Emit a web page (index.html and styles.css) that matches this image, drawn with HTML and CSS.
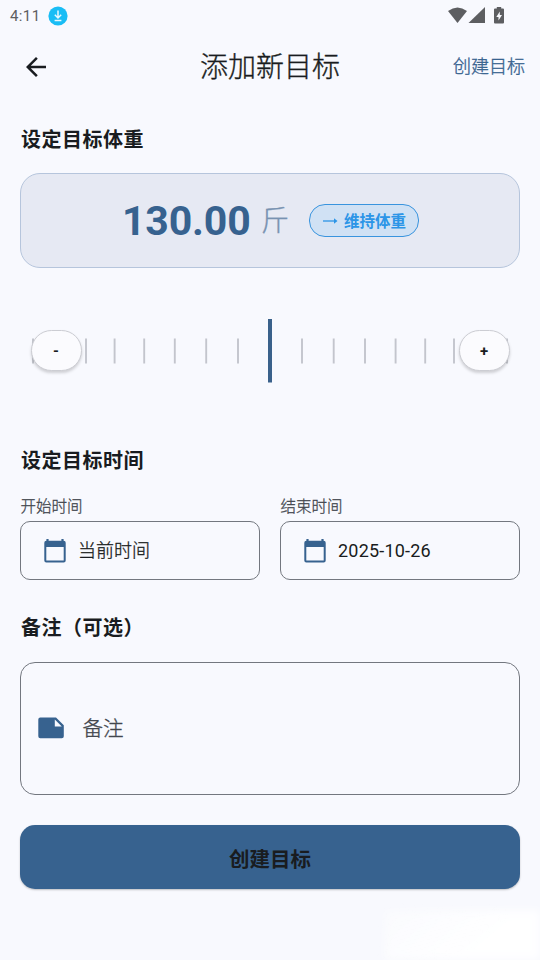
FILE: index.html
```html
<!DOCTYPE html>
<html lang="zh-CN">
<head>
<meta charset="utf-8">
<meta name="viewport" content="width=device-width, initial-scale=1">
<title>添加新目标</title>
<link rel="stylesheet" href="styles.css">
</head>
<body>
<div class="screen">
  <div class="status">
    <span class="clock">4:11</span>
    <svg class="download" viewBox="0 0 20 20"><circle cx="10" cy="10" r="9.6" fill="#19bdf5"/><path d="M10 4.5v7M6.8 8.8l3.2 3.2 3.2-3.2M6.6 14.4h6.8" fill="none" stroke="#e9f8fe" stroke-width="1.5"/></svg>
    <svg class="signals" viewBox="0 0 58 18"><g fill="#5d5e61"><path d="M0 4Q9.5-3.2 19 4L9.500 16Z"/><path d="M37 0v16H20.500Z"/><path d="M48.800 0h4.400v1.500h1.800q1 0 1 1v12.900q0 1-1 1h-8q-1 0-1-1V2.500q0-1 1-1h1.800Z"/></g><path d="M51.800 4.500l-3.500 5.400h2.200v3.700l3.500-5.500h-2.200Z" fill="#f8f9fe"/></svg>
  </div>
  <header class="appbar">
    <svg class="back" viewBox="0 0 24 24"><path d="M20 11H7.830l5.590-5.590L12 4l-8 8 8 8 1.410-1.410L7.830 13H20z" fill="#191c20"/></svg>
    <h1>添加新目标</h1>
    <span class="action">创建目标</span>
  </header>
  <main>
    <h2>设定目标体重</h2>
    <section class="weight">
      <span class="value">130.00</span>
      <span class="unit">斤</span>
      <span class="badge">
        <svg viewBox="0 0 16 8"><path d="M0 4h12" stroke="#2c95e7" stroke-width="1.300"/><path d="M11 1.200 14.500 4 11 6.800Z" fill="#2c95e7"/></svg>
        <span>维持体重</span>
      </span>
    </section>
    <section class="dial">
      <svg class="ticks" viewBox="0 0 500 66"><path d="M13 20.500v25M66 20.500v25M94.600 20.500v25M124.200 20.500v25M154.800 20.500v25M186.200 20.500v25M218 20.500v25M282 20.500v25M313.700 20.500v25M345 20.500v25M375.600 20.500v25M405.200 20.500v25M434 20.500v25M487 20.500v25" stroke="#c3c5cd" stroke-width="1.900"/><path d="M250 1v63.500" stroke="#3a618b" stroke-width="4"/></svg>
      <button class="step minus">-</button>
      <button class="step plus">+</button>
    </section>
    <h2 class="time-title">设定目标时间</h2>
    <section class="dates">
      <div class="field">
        <label>开始时间</label>
        <div class="input">
          <svg viewBox="0 0 24 26"><path d="M4.500 1v3M19.500 1v3" stroke="#37628f" stroke-width="2.200"/><path fill="#37628f" fill-rule="evenodd" d="M3.300 2.800h17.400q2 0 2 2v17.700q0 2-2 2H3.300q-2 0-2-2V4.800q0-2 2-2ZM3.300 9v13.500h17.400V9Z"/></svg>
          <span class="now">当前时间</span>
        </div>
      </div>
      <div class="field">
        <label>结束时间</label>
        <div class="input">
          <svg viewBox="0 0 24 26"><path d="M4.500 1v3M19.500 1v3" stroke="#37628f" stroke-width="2.200"/><path fill="#37628f" fill-rule="evenodd" d="M3.300 2.800h17.400q2 0 2 2v17.700q0 2-2 2H3.300q-2 0-2-2V4.800q0-2 2-2ZM3.300 9v13.500h17.400V9Z"/></svg>
          <span class="date">2025-10-26</span>
        </div>
      </div>
    </section>
    <h2 class="note-title">备注（可选）</h2>
    <div class="note">
      <svg viewBox="0 0 26 22"><path fill="#37628f" fill-rule="evenodd" d="M2.300 .5H18l7.800 7.700v11q0 2-2 2H2.300q-2 0-2-2V2.500q0-2 2-2ZM16.800 2.500V9.500H23.800Z"/></svg>
      <span>备注</span>
    </div>
    <button class="submit">创建目标</button>
  </main>
  <div class="glow"></div>
</div>
</body>
</html>
```
FILE: styles.css
```css
* { box-sizing: border-box; }
body {
  margin: 0;
  background: #f8f9fe;
  color: #191c20;
  font-family: Roboto, "Noto Sans CJK SC", sans-serif;
}
button { font-family: inherit; color: inherit; padding: 0; }
svg { display: block; flex: none; }
.screen { position: relative; width: 540px; height: 960px; overflow: hidden; }

.status { display: flex; align-items: center; height: 32px; padding: 0 34px 0 10px; }
.clock { width: 38px; font-size: 15px; letter-spacing: .4px; color: #5d5e61; }
.download { width: 20px; height: 20px; }
.signals { width: 58px; height: 18px; margin-left: auto; }

.appbar { display: grid; grid-template-columns: 1fr 140px 1fr; align-items: center; height: 70px; padding: 0 15px 0 15px; }
.back { width: 30px; height: 30px; margin-left: 6px; }
h1 { margin: 1px 0 0; font-size: 28px; line-height: 40px; font-weight: 300; white-space: nowrap; -webkit-text-stroke: .35px; }
.action { justify-self: end; font-size: 18px; line-height: 26px; color: #37628f; font-weight: 300; -webkit-text-stroke: .35px; }

main { padding: 23px 20px 0; }
h2 { margin: 0; height: 30px; padding-left: 1px; font-size: 20px; line-height: 30px; letter-spacing: .5px; font-weight: 700; }
.weight {
  display: flex; align-items: center; height: 95px; margin-top: 18px; padding-left: 101px;
  border: 1px solid #b6c5dc; border-radius: 20px; background: #e6e9f3;
}
.value { width: 139px; font-size: 41px; font-weight: 700; line-height: 48px; color: #37628f; letter-spacing: -.15px; }
.unit { width: 48px; padding-top: 3px; font-size: 28px; line-height: 40px; font-weight: 300; color: #7892b1; -webkit-text-stroke: .35px; }
.badge {
  display: flex; align-items: center; gap: 5px; width: 110px; height: 33px; padding-left: 13px;
  border: 1px solid #3994de; border-radius: 16px; background: #d0e1f4;
  font-size: 15.500px; font-weight: 700; line-height: 24px; color: #2c95e7; white-space: nowrap;
}
.badge span { padding-top: 2px; }
.badge svg { width: 16px; height: 8px; }

.dial { position: relative; height: 66px; margin-top: 50px; }
.ticks { width: 500px; height: 66px; }
.step {
  position: absolute; top: 12px; width: 51px; height: 41px; border: 1px solid #cccdd3; border-radius: 21px;
  background: #fbfbfe; box-shadow: 0 2px 3px #0000002b; font-size: 15px; line-height: 38px; font-weight: 700;
}
.minus { left: 10.500px; }
.plus { right: 10.500px; }

.time-title { margin-top: 62px; }
.dates { display: grid; grid-template-columns: 1fr 1fr; gap: 20px; margin-top: 18px; }
label { display: block; height: 27px; padding-left: .5px; font-size: 15.500px; line-height: 26px; font-weight: 300; color: #43474e; -webkit-text-stroke: .3px; }
.input {
  display: flex; align-items: center; gap: 11px; height: 59px; padding-left: 22px;
  border: 1px solid #73777f; border-radius: 10px; font-size: 18px; line-height: 26px;
}
.input svg { width: 24px; height: 26px; }
.now { font-weight: 300; -webkit-text-stroke: .3px; }
.date { letter-spacing: .2px; }
.note-title { margin-top: 33px; }
.note {
  display: flex; align-items: center; gap: 18.500px; height: 133px; margin-top: 19px; padding-left: 17px;
  border: 1px solid #73777f; border-radius: 15px; font-size: 20.500px; line-height: 30px; font-weight: 300; color: #43474e; -webkit-text-stroke: .35px;
}
.note svg { width: 26px; height: 22px; margin-top: -2px; }
.submit {
  display: block; width: 100%; height: 64px; margin-top: 30px; padding-top: 1px; border: 0; border-radius: 15px;
  background: #37628f; box-shadow: 0 1px 2px #0000003d; font-size: 20.500px; font-weight: 700;
}
.glow {
  position: absolute; right: 0; bottom: 0; width: 156px; height: 50px;
  background: linear-gradient(140deg, #fff5, #ffffffe0 60%);
  filter: blur(4px);
}
```
